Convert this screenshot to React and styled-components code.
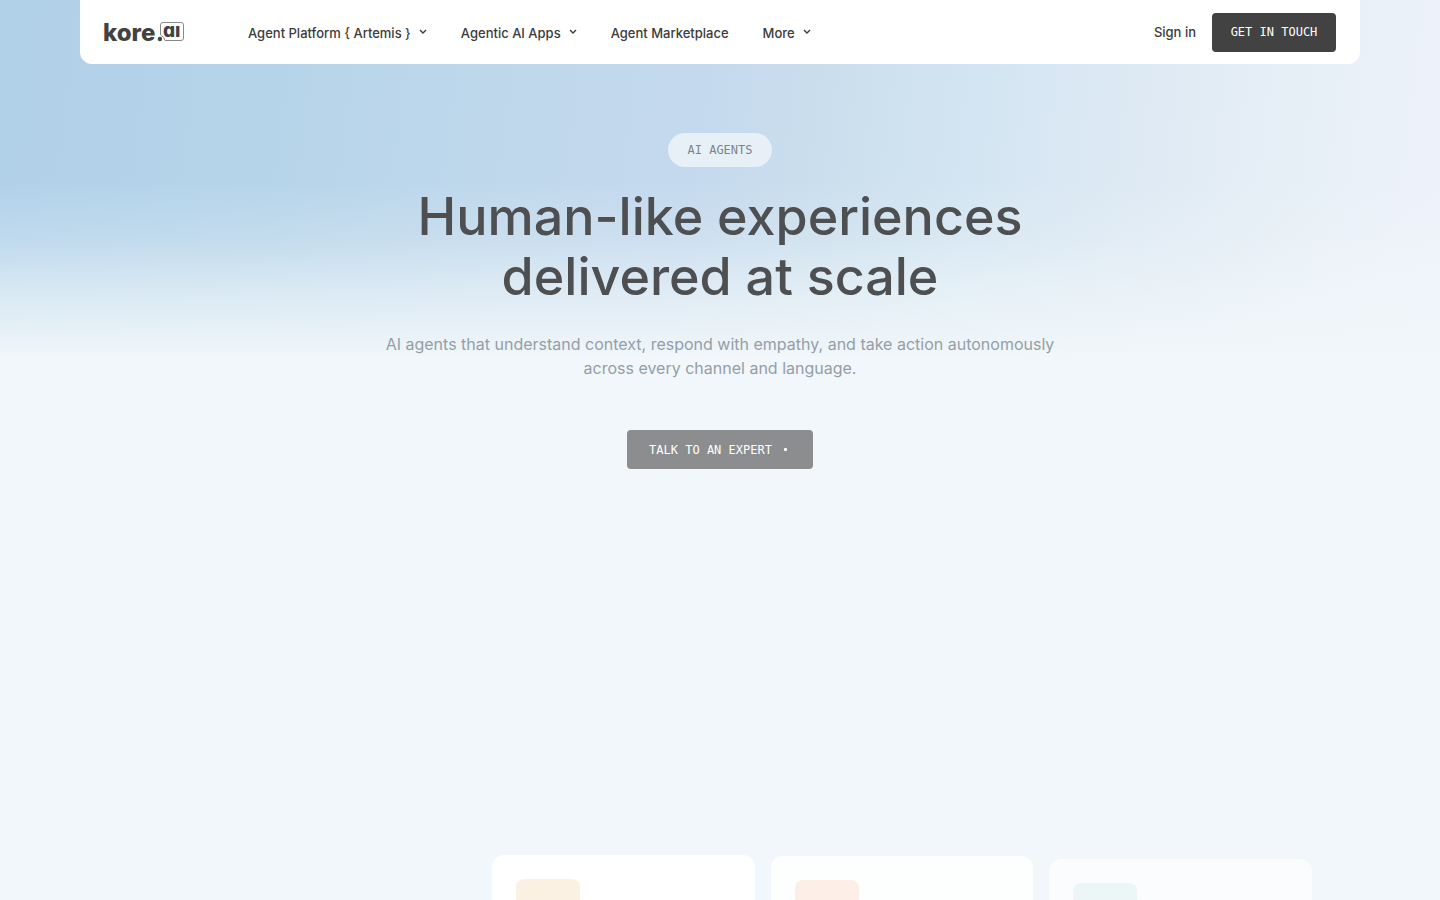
import React from 'react';
import styled, { createGlobalStyle } from 'styled-components';

const GlobalStyle = createGlobalStyle`
  * {
    box-sizing: border-box;
  }

  body {
    margin: 0;
    background: #f1f7fa;
    color: #424242;
    font-family: Inter, 'Liberation Sans', sans-serif;
    overflow-x: hidden;
  }
`;

const Page = styled.div`
  min-height: 100vh;
  background:
    linear-gradient(to bottom, rgba(241, 247, 250, 0) 180px, rgba(241, 247, 250, 0.22) 240px, rgba(241, 247, 250, 0.6) 290px, rgba(241, 247, 250, 0.82) 330px, #f1f7fa 358px),
    linear-gradient(97deg, #b1d1e9 0%, #b6d4e9 18%, #c0d8ec 34%, #c4d9ee 45%, #cbdfed 54%, #d3e5f2 62%, #dfeaf4 74%, #e8f0f7 84%, #edf2fa 92%, #eff4f8 100%);
`;

const Header = styled.header`
  display: flex;
  align-items: center;
  height: 64px;
  margin: 0 80px;
  padding: 0 24px;
  background: #fff;
  border-radius: 0 0 12px 12px;
`;

const Logo = styled.a`
  display: flex;
  align-items: center;
  width: 80px;
  margin-right: 64px;
  color: #424242;
  text-decoration: none;

  svg {
    overflow: visible;
  }
`;

const Nav = styled.nav`
  display: flex;
  align-items: center;
  gap: 34px;
  flex: 1;
  padding-top: 2px;
`;

const NavLink = styled.a`
  color: #3b3b3b;
  font-size: 13px;
  font-weight: 500;
  line-height: 20px;
  text-decoration: none;
`;

const NavButton = styled.button`
  display: flex;
  align-items: center;
  gap: 8px;
  padding: 0;
  border: none;
  background: none;
  color: #3b3b3b;
  font-family: inherit;
  font-size: 13px;
  font-weight: 500;
  line-height: 20px;
  cursor: pointer;

  svg {
    margin-bottom: 2px;
  }
`;

const Actions = styled.div`
  display: flex;
  align-items: center;
  gap: 16px;
`;

const MonoButton = styled.button`
  display: flex;
  align-items: center;
  justify-content: center;
  gap: 12px;
  height: 39px;
  width: ${(props) => props.$width};
  padding: 0;
  border: none;
  border-radius: 4px;
  background: ${(props) => (props.$faded ? '#8c8d8e' : '#424242')};
  color: #fff;
  font-family: 'DejaVu Sans Mono', monospace;
  font-size: 12px;
  line-height: 20px;
  white-space: nowrap;
  cursor: pointer;
`;

const Dot = styled.span`
  width: 3px;
  height: 3px;
  margin-right: 4px;
  border-radius: 1px;
  background: #fff;
`;

const Hero = styled.main`
  display: flex;
  flex-direction: column;
  align-items: center;
  min-height: 791px;
  padding-top: 69px;
  text-align: center;
`;

const Badge = styled.span`
  display: flex;
  align-items: center;
  justify-content: center;
  height: 34px;
  min-width: 104px;
  padding: 0 16px;
  border-radius: 17px;
  background: #e8f0f7;
  color: #7c848c;
  font-family: 'DejaVu Sans Mono', monospace;
  font-size: 12px;
  line-height: 20px;
`;

const Title = styled.h1`
  max-width: 720px;
  margin: 20px 0 25px;
  color: #4e4f50;
  font-size: 52px;
  font-weight: 500;
  line-height: 60px;
`;

const Lead = styled.p`
  max-width: 680px;
  margin: 0 0 50px;
  color: #959ea7;
  font-size: 16px;
  font-weight: 400;
  line-height: 24px;
`;

const Cards = styled.section`
  display: grid;
  grid-template-columns: 348px 1fr 1fr 1fr;
  gap: 16px;
  max-width: 1184px;
  margin: 0 auto;
`;

const Card = styled.article`
  grid-column: ${(props) => props.$column};
  height: 320px;
  margin-top: ${(props) => props.$shift};
  padding: 24px;
  border-radius: 12px;
  background: ${(props) => props.$background};
`;

const CardIcon = styled.div`
  width: 64px;
  height: 64px;
  border-radius: 8px;
  background: ${(props) => props.$color};
`;

const cards = [
  { column: 2, shift: '0', background: '#ffffff', color: '#faf1e3' },
  { column: 3, shift: '1px', background: '#fdfffe', color: '#fdeee7' },
  { column: 4, shift: '4px', background: '#fafcfd', color: '#edf6f7' },
];

function Chevron() {
  return (
    <svg width="8" height="10" viewBox="0 0 8 10" fill="none" aria-hidden="true">
      <path d="M1 3L4 6L7 3" stroke="#3b3b3b" strokeWidth="1.4" />
    </svg>
  );
}

function LogoMark() {
  return (
    <svg width="80" height="34" viewBox="0 0 80 34" role="img" aria-label="kore.ai">
      <text x="-1" y="26" fill="#424242" fontFamily="Inter, sans-serif" fontSize="24" fontWeight="800">kore</text>
      <circle cx="55.9" cy="24" r="2.2" fill="#424242" />
      <path
        d="M56.5 20V10Q56.5 7.5 59 7.5H77Q79.5 7.5 79.5 10V23Q79.5 25.5 77 25.5H61Q60.5 22 56.5 20Z"
        fill="none"
        stroke="#888"
      />
      <text
        x="59"
        y="22"
        fill="#424242"
        fontFamily="Inter, sans-serif"
        fontSize="19"
        fontWeight="800"
        style={{ fontFeatureSettings: '"cv11"' }}
      >
        aı
      </text>
    </svg>
  );
}

function App() {
  return (
    <>
      <GlobalStyle />
      <Page>
        <Header>
          <Logo href="#home">
            <LogoMark />
          </Logo>
          <Nav>
            <NavButton>
              Agent Platform {'{ Artemis }'}
              <Chevron />
            </NavButton>
            <NavButton>
              Agentic AI Apps
              <Chevron />
            </NavButton>
            <NavLink href="#marketplace">Agent Marketplace</NavLink>
            <NavButton>
              More
              <Chevron />
            </NavButton>
          </Nav>
          <Actions>
            <NavLink href="#signin">Sign in</NavLink>
            <MonoButton $width="124px">GET IN TOUCH</MonoButton>
          </Actions>
        </Header>
        <Hero>
          <Badge>AI AGENTS</Badge>
          <Title>Human-like experiences delivered at scale</Title>
          <Lead>
            AI agents that understand context, respond with empathy, and take action autonomously
            across every channel and language.
          </Lead>
          <MonoButton $width="186px" $faded>
            TALK TO AN EXPERT
            <Dot />
          </MonoButton>
        </Hero>
        <Cards>
          {cards.map((card) => (
            <Card key={card.column} $column={card.column} $shift={card.shift} $background={card.background}>
              <CardIcon $color={card.color} />
            </Card>
          ))}
        </Cards>
      </Page>
    </>
  );
}

export default App;
